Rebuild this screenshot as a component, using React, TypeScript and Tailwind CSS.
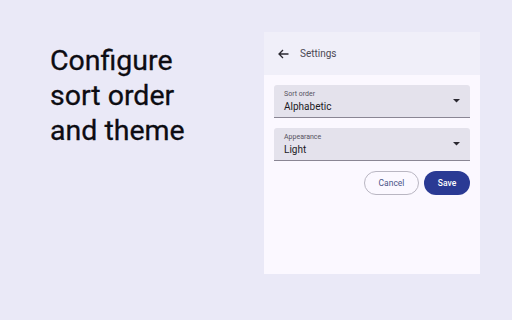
import React from "react";

function Field({ label, value }: { label: string; value: string }) {
  return (
    <div className="relative h-[33px] bg-[#e4e2ec] rounded-t-[3px] border-b border-[#8a8694] pl-[10px] flex flex-col">
      <div className="text-[7px] leading-[9px] text-[#56525e] mt-[5px]">{label}</div>
      <div className="text-[10px] leading-[13px] text-[#1c1b1f] mt-[1px]">{value}</div>
      <svg className="absolute right-[10px] top-[14px]" width="7" height="4" viewBox="0 0 7 4">
        <path d="M0 0 L7 0 L3.5 3.5 Z" fill="#2a2830" />
      </svg>
    </div>
  );
}

export default function App() {
  return (
    <div className="w-[512px] h-[320px] bg-[#eae9f7] flex font-['Roboto',sans-serif]">
      <div className="w-[264px] shrink-0 pl-[50px] pt-[43px]">
        <div className="text-[28.5px] leading-[35px] text-[#0d0c12] [-webkit-text-stroke:0.3px_#0d0c12]">
          Configure
          <br />
          sort order
          <br />
          and theme
        </div>
      </div>
      <div className="mt-[32px] w-[216px] h-[242px] bg-[#fbf8ff] flex flex-col">
        <div className="h-[43px] bg-[#f0eff9] flex items-center pl-[14px]">
          <svg width="11" height="10" viewBox="0 0 11 10" fill="none">
            <path d="M10.5 5 H1.2 M5 1 L1 5 L5 9" stroke="#2a2830" strokeWidth="1.3" />
          </svg>
          <span className="ml-[11px] text-[10px] text-[#4b4853]">Settings</span>
        </div>
        <div className="px-[10px] pt-[10px] flex flex-col gap-[10px]">
          <Field label="Sort order" value="Alphabetic" />
          <Field label="Appearance" value="Light" />
          <div className="flex justify-end gap-[5px]">
            <div className="w-[55px] h-[24px] rounded-full border border-[#b9b6c2] flex items-center justify-center text-[8.5px] text-[#4a5488]">
              Cancel
            </div>
            <div className="w-[46px] h-[24px] rounded-full bg-[#2a3a94] flex items-center justify-center text-[8.5px] font-medium text-white">
              Save
            </div>
          </div>
        </div>
      </div>
    </div>
  );
}
